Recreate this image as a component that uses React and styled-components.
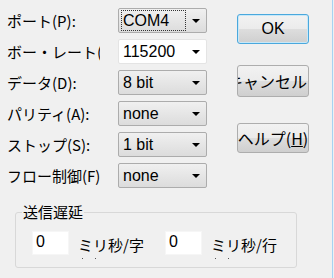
import React from "react";
import styled, { createGlobalStyle } from "styled-components";

const Global = createGlobalStyle`
  html, body {
    margin: 0;
    padding: 0;
    background: #f0f0f0;
  }
  body {
    font-family: "Noto Sans CJK JP", "Liberation Sans", sans-serif;
    color: #000;
  }
`;

const Dialog = styled.div`
  box-sizing: border-box;
  width: 333px;
  height: 278px;
  border-right: 1px solid #a6d2f2;
  background: #f0f0f0;
  overflow: hidden;
`;

const Top = styled.div`
  display: flex;
`;

const Form = styled.div`
  display: grid;
  grid-template-columns: 111px 89px;
  grid-auto-rows: 25px;
  row-gap: 6px;
  padding: 8px 0 0 7px;
`;

const Label = styled.div`
  width: 93px;
  font-size: 15px;
  line-height: 25px;
  white-space: nowrap;
  overflow: hidden;
`;

const Combo = styled.div`
  box-sizing: border-box;
  position: relative;
  display: flex;
  align-items: center;
  height: 25px;
  padding: 0 0 0 2px;
  font-family: "Liberation Sans", sans-serif;
  font-size: 16px;
  border: 1px solid ${(p) => (p.$edit ? "#e4e4e4" : "#acacac")};
  border-radius: 2px;
  background: ${(p) =>
    p.$edit ? "#fff" : "linear-gradient(#f0f0f0 0%, #e6e6e6 50%, #dcdcdc 100%)"};
`;

const Value = styled.div`
  flex: 1;
  box-sizing: border-box;
  height: 21px;
  line-height: 20px;
  padding-left: 1px;
  border: 1px dotted ${(p) => (p.$focus ? "#333" : "transparent")};
  margin-right: 4px;
`;

const Arrow = styled.div`
  width: 0;
  height: 0;
  margin: 0 6px 0 2px;
  border-left: 4px solid transparent;
  border-right: 4px solid transparent;
  border-top: 4px solid #000;
`;

const Buttons = styled.div`
  display: flex;
  flex-direction: column;
  padding: 14px 0 0 30px;
`;

const Button = styled.div`
  box-sizing: border-box;
  display: flex;
  align-items: center;
  justify-content: ${(p) => (p.$end ? "flex-end" : "center")};
  width: 72px;
  height: ${(p) => p.$h}px;
  margin-top: ${(p) => p.$mt}px;
  padding-right: ${(p) => (p.$end ? 1 : 0)}px;
  overflow: hidden;
  white-space: nowrap;
  font-size: ${(p) => p.$fs || 16}px;
  border: 1px solid ${(p) => (p.$default ? "#4aa8dd" : "#adadad")};
  border-radius: 3px;
  background: linear-gradient(#f2f2f2 0%, #ebebeb 50%, #dddddd 51%, #cfcfcf 100%);
  box-shadow: ${(p) => (p.$default ? "inset 0 0 0 1px #c8e8f8" : "none")};
`;

const Latin = styled.span`
  font-family: "Liberation Sans", sans-serif;
  font-size: 16px;
`;

const Group = styled.fieldset`
  box-sizing: border-box;
  width: 282px;
  height: 64px;
  margin: 16px 0 0 15px;
  padding: 11px 0 0 16px;
  border: 1px solid #d8d8d8;
  border-radius: 3px;
  display: flex;
  align-items: flex-start;
`;

const Legend = styled.legend`
  font-size: 15px;
  padding: 0 1px;
  margin-left: -10px;
  line-height: 16px;
`;

const Field = styled.div`
  box-sizing: border-box;
  width: 37px;
  height: 24px;
  background: #fff;
  border: 1px solid #f6f6f6;
  font-family: "Liberation Sans", sans-serif;
  font-size: 16px;
  line-height: 20px;
  padding-left: 3px;
`;

const Unit = styled.div`
  position: relative;
  width: ${(p) => p.$w}px;
  margin-left: 9px;
  font-size: 15px;
  line-height: 28px;
  height: 24px;
  white-space: nowrap;
  &::after {
    content: "";
    position: absolute;
    left: 4px;
    top: 27px;
    width: 1px;
    height: 1px;
    background: #555;
    box-shadow: 13px 0 0 #555;
  }
`;

const rows = [
  { label: "ポート(P):", value: "COM4", focus: true },
  { label: "ボー・レート(B):", value: "115200", edit: true },
  { label: "データ(D):", value: "8 bit" },
  { label: "パリティ(A):", value: "none" },
  { label: "ストップ(S):", value: "1 bit" },
  { label: "フロー制御(F):", value: "none" },
];

export default function App() {
  return (
    <>
      <Global />
      <Dialog>
        <Top>
          <Form>
            {rows.map((r) => (
              <React.Fragment key={r.label}>
                <Label>{r.label}</Label>
                <Combo $edit={r.edit}>
                  <Value $focus={r.focus}>{r.value}</Value>
                  <Arrow />
                </Combo>
              </React.Fragment>
            ))}
          </Form>
          <Buttons>
            <Button $default $h={30} $mt={0}>
              <Latin>OK</Latin>
            </Button>
            <Button $h={32} $mt={21} $fs={16} $end>
              キャンセル
            </Button>
            <Button $h={30} $mt={26} $fs={16}>
              ヘルプ(<u>H</u>)
            </Button>
          </Buttons>
        </Top>
        <Group>
          <Legend>送信遅延</Legend>
          <Field>0</Field>
          <Unit $w={87}>ミリ秒/字</Unit>
          <Field>0</Field>
          <Unit $w={80}>ミリ秒/行</Unit>
        </Group>
      </Dialog>
    </>
  );
}
